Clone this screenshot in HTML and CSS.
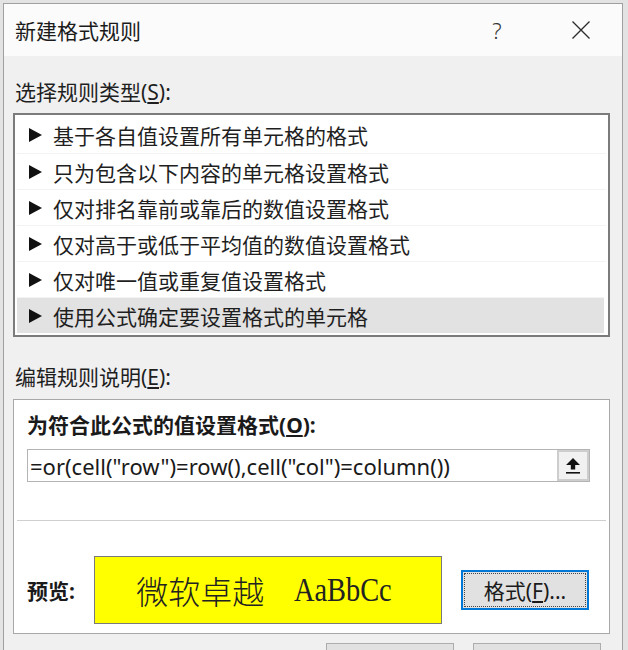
FILE: index.html
```html
<!DOCTYPE html>
<html lang="zh-CN">
<head>
<meta charset="utf-8">
<title>新建格式规则</title>
<link rel="stylesheet" href="styles.css">
</head>
<body>
<div class="window">
  <div class="titlebar">
    <span class="title">新建格式规则</span>
    <span class="help">?</span>
    <span class="close">
      <svg width="18" height="18" viewBox="0 0 18 18"><path d="M0.5 0.5 L17.5 17.5 M17.5 0.5 L0.5 17.5" stroke="#2b2b2b" stroke-width="1.3" fill="none"/></svg>
    </span>
  </div>
  <div class="content">
    <div class="label">选择规则类型(<u>S</u>):</div>
    <ul class="rule-list">
      <li><svg class="tri" width="13" height="14" viewBox="0 0 13 14"><polygon points="0,0 13,7 0,14" fill="#111"/></svg><span>基于各自值设置所有单元格的格式</span></li>
      <li><svg class="tri" width="13" height="14" viewBox="0 0 13 14"><polygon points="0,0 13,7 0,14" fill="#111"/></svg><span>只为包含以下内容的单元格设置格式</span></li>
      <li><svg class="tri" width="13" height="14" viewBox="0 0 13 14"><polygon points="0,0 13,7 0,14" fill="#111"/></svg><span>仅对排名靠前或靠后的数值设置格式</span></li>
      <li><svg class="tri" width="13" height="14" viewBox="0 0 13 14"><polygon points="0,0 13,7 0,14" fill="#111"/></svg><span>仅对高于或低于平均值的数值设置格式</span></li>
      <li><svg class="tri" width="13" height="14" viewBox="0 0 13 14"><polygon points="0,0 13,7 0,14" fill="#111"/></svg><span>仅对唯一值或重复值设置格式</span></li>
      <li class="selected"><svg class="tri" width="13" height="14" viewBox="0 0 13 14"><polygon points="0,0 13,7 0,14" fill="#111"/></svg><span>使用公式确定要设置格式的单元格</span></li>
    </ul>
    <div class="label label-edit">编辑规则说明(<u>E</u>):</div>
    <div class="edit-box">
      <div class="bold-label">为符合此公式的值设置格式(<u>O</u>):</div>
      <div class="formula">
        <span class="formula-text">=or(cell("row")=row(),cell("col")=column())</span>
        <span class="ref-btn">
          <svg width="14" height="16" viewBox="0 0 14 16"><polygon points="7,0 14,7 9.2,7 9.2,11.5 4.8,11.5 4.8,7 0,7" fill="#111"/><rect x="0" y="14" width="14" height="1.6" fill="#111"/></svg>
        </span>
      </div>
      <div class="sep"></div>
      <div class="preview-row">
        <span class="preview-label">预览:</span>
        <div class="preview"><span class="pv-cjk">微软卓越</span><span class="pv-latin">AaBbCc</span></div>
        <button class="format-btn">格式(<u>F</u>)...</button>
      </div>
    </div>
    <div class="footer">
      <span class="dlg-btn"></span>
      <span class="dlg-btn"></span>
    </div>
  </div>
</div>
</body>
</html>
```
FILE: styles.css
```css
html, body {
  margin: 0;
  padding: 0;
  height: 650px;
  overflow: hidden;
  background: #e3e3e3;
}
body {
  font-family: "Noto Sans", "Noto Sans CJK SC", sans-serif;
  color: #1f1f1f;
}
.window {
  margin: 3px 0 0 3px;
  width: 618px;
  height: 646px;
  overflow: hidden;
  border: 1px solid #a0a0a0;
  border-bottom: none;
  background: #f0f0f0;
}
.titlebar {
  height: 52px;
  background: #fbfbfb;
  display: flex;
  align-items: center;
  padding-left: 11px;
  padding-right: 22px;
}
.title {
  font-size: 21px;
  color: #1b1b1b;
  font-family: "Noto Sans CJK SC", sans-serif;
}
.help {
  margin-left: auto;
  width: 30px;
  text-align: center;
  font-size: 22px;
  font-weight: 300;
  color: #333;
}
.close {
  margin-left: 50px;
  width: 38px;
  height: 18px;
  display: flex;
  justify-content: center;
}
.content {
  padding: 0 12px 0 9px;
}
.label {
  margin-top: 22px;
  height: 28px;
  line-height: 28px;
  padding-left: 2px;
  font-size: 21px;
}
.label-edit {
  margin-top: 26px;
}
.rule-list {
  list-style: none;
  margin: 7px 0 0 0;
  padding: 2px;
  border: 2px solid #7b7b7b;
  background: #fff;
}
.rule-list li {
  box-sizing: border-box;
  height: 36px;
  display: flex;
  align-items: center;
  padding-left: 12px;
  font-size: 21px;
  color: #1f1f1f;
}
.rule-list li + li {
  border-top: 1px solid #f3f3f3;
}
.rule-list li.selected {
  background: #e2e2e2;
  margin-right: 2px;
}
.tri {
  margin-right: 11px;
  flex: none;
}
.edit-box {
  margin-top: 8px;
  border: 1px solid #a8a8a8;
  background: #fff;
  padding: 11px 13px 9px 13px;
}
.bold-label {
  height: 28px;
  line-height: 28px;
  font-size: 21px;
  font-weight: 700;
  color: #1a1a1a;
}
.formula {
  margin-top: 10px;
  box-sizing: border-box;
  width: 563px;
  height: 33px;
  border: 1px solid #b4b4b4;
  display: flex;
  align-items: center;
}
.formula-text {
  padding-left: 2px;
  font-size: 22px;
  color: #1a1a1a;
  white-space: nowrap;
}
.ref-btn {
  margin-left: auto;
  box-sizing: border-box;
  width: 32px;
  height: 31px;
  border: 2px solid #cdcdcd;
  background: #f1f1f1;
  display: flex;
  align-items: center;
  justify-content: center;
}
.sep {
  margin: 38px -10px 0 -10px;
  height: 1px;
  background: #cfcfcf;
}
.preview-row {
  margin-top: 35px;
  display: flex;
  align-items: center;
}
.preview-label {
  width: 67px;
  font-size: 21px;
  font-weight: 700;
  color: #1a1a1a;
}
.preview {
  box-sizing: border-box;
  width: 348px;
  height: 68px;
  border: 1px solid #7a7a7a;
  background: #ffff00;
  display: flex;
  align-items: center;
  justify-content: center;
  color: #222;
}
.pv-cjk {
  font-family: "Noto Sans CJK SC", sans-serif;
  font-weight: 300;
  font-size: 32px;
}
.pv-latin {
  display: inline-block;
  margin-left: 22px;
  font-family: "Liberation Serif", serif;
  font-size: 33px;
  transform: scaleX(0.86);
}
.format-btn {
  margin-left: 19px;
  box-sizing: border-box;
  width: 128px;
  height: 40px;
  border: 2px solid #0078d7;
  background: #e1e1e1;
  outline: 1px dotted #444;
  outline-offset: -4px;
  font-family: "Noto Sans", "Noto Sans CJK SC", sans-serif;
  font-size: 21px;
  color: #1a1a1a;
  padding: 0;
}
.footer {
  margin-top: 9px;
  display: flex;
  justify-content: flex-end;
  gap: 19px;
  padding-right: 9px;
}
.dlg-btn {
  display: block;
  box-sizing: border-box;
  width: 128px;
  height: 40px;
  border: 1px solid #adadad;
  background: #e1e1e1;
}
```
